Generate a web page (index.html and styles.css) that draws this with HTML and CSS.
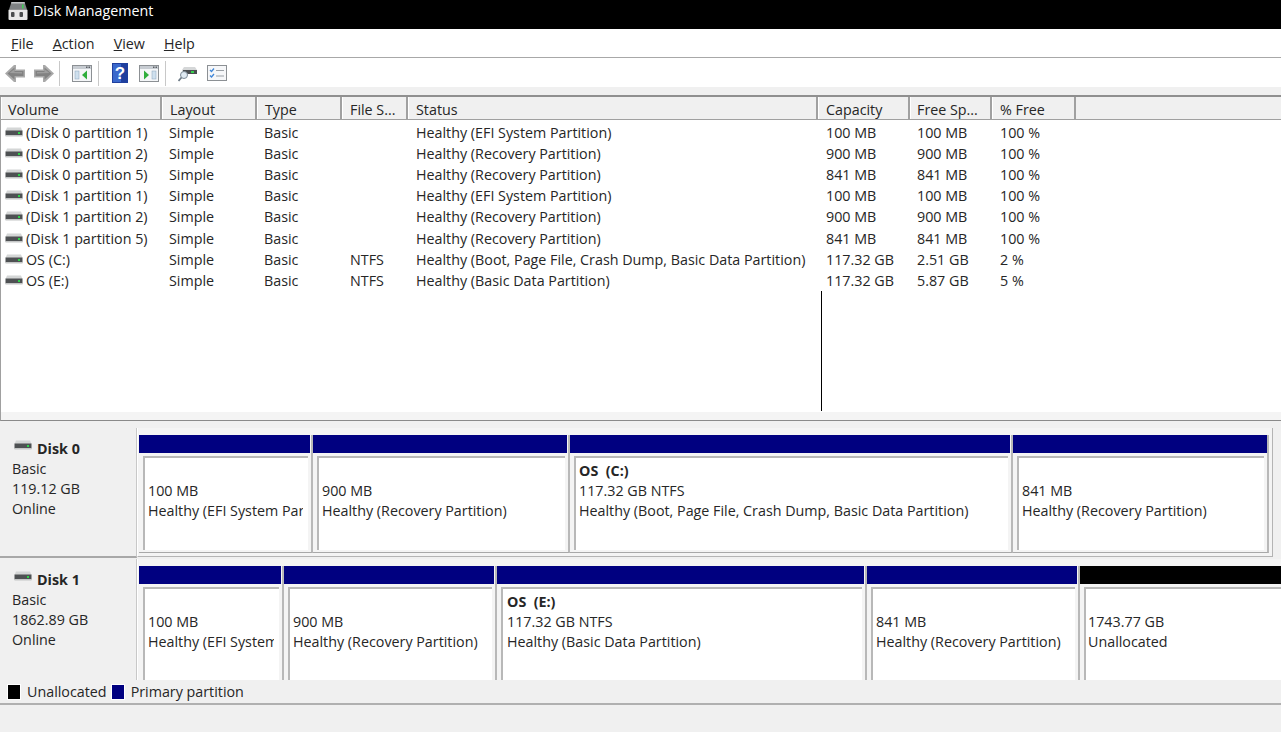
FILE: index.html
```html
<!DOCTYPE html>
<html lang="en">
<head>
<meta charset="utf-8">
<title>Disk Management</title>
<link rel="stylesheet" href="styles.css">
</head>
<body>
<svg class="defs" width="0" height="0" aria-hidden="true">
  <defs>
    <symbol id="drive" viewBox="0 0 18 12">
      <path d="M2 1.500h14l1.500 3.500H.5z" fill="#d4d6d6"/>
      <rect x="0.500" y="4.500" width="17" height="5" fill="#4e5153"/>
      <rect x="0.500" y="9" width="17" height="1.500" fill="#c4c6c6"/>
      <rect x="13" y="6" width="2" height="2" fill="#2fd24a"/>
    </symbol>
    <symbol id="arrow" viewBox="0 0 22 19">
      <path d="M1 9.500 10 1h2V5.500H21V13.500H12V18H10Z" fill="#a9a9a9"/>
      <path d="M3.500 9.500 10.500 3.500V7H19.500V12H10.500V15.500Z" fill="#828282"/>
      <path d="M5.500 9 10.500 5V8H18V9.500Z" fill="#9d9d9d"/>
    </symbol>
    <symbol id="panel" viewBox="0 0 20 17">
      <rect x="0.500" y="0.500" width="19" height="16" fill="#f4f6f8" stroke="#8c9094"/>
      <rect x="1" y="1" width="18" height="3" fill="#c7ccd2"/>
      <rect x="14" y="1.500" width="1.500" height="1.500" fill="#5c6066"/>
      <rect x="16.500" y="1.500" width="1.500" height="1.500" fill="#5c6066"/>
    </symbol>
  </defs>
</svg>

<header class="titlebar">
  <svg class="title-icon" viewBox="0 0 20 20" width="20" height="20" aria-hidden="true">
    <path d="M3.500 1h13L19 8.500H1z" fill="#7f8284"/>
    <path d="M3.500 1h13l.5 1.500H3z" fill="#c4c6c8"/>
    <rect x="14" y="3.500" width="1.500" height="4" fill="#3fcf55"/>
    <rect x="0.500" y="8.500" width="19" height="10.500" rx="1" fill="#e8e8e8"/>
    <rect x="3" y="11" width="3.500" height="5" rx="1" fill="#4a4c4e"/>
    <rect x="11.500" y="11" width="3.500" height="5" rx="1" fill="#4a4c4e"/>
  </svg>
  <span class="title-text">Disk Management</span>
</header>

<nav class="menubar">
  <span class="menu-item"><u>F</u>ile</span>
  <span class="menu-item"><u>A</u>ction</span>
  <span class="menu-item"><u>V</u>iew</span>
  <span class="menu-item"><u>H</u>elp</span>
</nav>

<div class="toolbar">
  <svg class="tb-icon tb-back" width="22" height="19" aria-hidden="true"><use href="#arrow"/></svg>
  <svg class="tb-icon tb-fwd" width="22" height="19" aria-hidden="true"><use href="#arrow"/></svg>
  <span class="tb-sep"></span>
  <svg class="tb-icon tb-show" viewBox="0 0 20 17" width="20" height="17" aria-hidden="true">
    <use href="#panel"/>
    <rect x="3" y="6" width="4" height="8" fill="#cfe0ee" stroke="#8aa4bc" stroke-width=".5"/>
    <path d="M15 5.500v9L10 10z" fill="#2fae3c"/>
  </svg>
  <span class="tb-sep"></span>
  <svg class="tb-icon tb-help" viewBox="0 0 16 20" width="16" height="20" aria-hidden="true">
    <rect x="0" y="0" width="16" height="20" fill="#1f3f9e"/>
    <rect x="1" y="1" width="8" height="18" fill="#3a68cc"/>
    <text x="8" y="16" class="help-mark">?</text>
  </svg>
  <svg class="tb-icon tb-hide" viewBox="0 0 20 17" width="20" height="17" aria-hidden="true">
    <use href="#panel"/>
    <rect x="13" y="6" width="4" height="8" fill="#cfe0ee" stroke="#8aa4bc" stroke-width=".5"/>
    <path d="M5 5.500v9l5-4.500z" fill="#2fae3c"/>
  </svg>
  <span class="tb-sep"></span>
  <svg class="tb-icon tb-search" viewBox="0 0 20 17" width="20" height="17" aria-hidden="true">
    <path d="M6 2h11l2 3v4H4V5z" fill="#d5d7d8"/>
    <rect x="5" y="5" width="14" height="4" fill="#4a4d50"/>
    <rect x="13" y="6" width="3" height="2" fill="#37d04e"/>
    <circle cx="6" cy="10" r="3.500" fill="#dfe9f2" stroke="#7d8a96"/>
    <path d="M3.500 12.500 0.500 16" stroke="#6d7a86" stroke-width="1.800"/>
  </svg>
  <svg class="tb-icon tb-check" viewBox="0 0 20 17" width="20" height="17" aria-hidden="true">
    <rect x="0.500" y="0.500" width="19" height="15" fill="#f6f7f9" stroke="#8c9094"/>
    <path d="M3 5 4.500 6.500 7 3.500M3 10.500 4.500 12 7 9" fill="none" stroke="#3f86d8" stroke-width="1.300"/>
    <path d="M9 5.500h8M9 11h8" stroke="#9aa0a6"/>
  </svg>
</div>
<div class="toolbar-gap"></div>

<section class="list">
  <div class="list-head">
    <span class="th col-volume">Volume</span>
    <span class="th col-layout">Layout</span>
    <span class="th col-type">Type</span>
    <span class="th col-fs">File S...</span>
    <span class="th col-status">Status</span>
    <span class="th col-cap">Capacity</span>
    <span class="th col-free">Free Sp...</span>
    <span class="th col-pct">% Free</span>
  </div>
  <div class="list-body">
    <div class="row"><span class="td col-volume"><svg class="drive-sm" width="18" height="12" aria-hidden="true"><use href="#drive"/></svg>(Disk 0 partition 1)</span><span class="td col-layout">Simple</span><span class="td col-type">Basic</span><span class="td col-fs"></span><span class="td col-status">Healthy (EFI System Partition)</span><span class="td col-cap">100 MB</span><span class="td col-free">100 MB</span><span class="td col-pct">100 %</span></div>
    <div class="row"><span class="td col-volume"><svg class="drive-sm" width="18" height="12" aria-hidden="true"><use href="#drive"/></svg>(Disk 0 partition 2)</span><span class="td col-layout">Simple</span><span class="td col-type">Basic</span><span class="td col-fs"></span><span class="td col-status">Healthy (Recovery Partition)</span><span class="td col-cap">900 MB</span><span class="td col-free">900 MB</span><span class="td col-pct">100 %</span></div>
    <div class="row"><span class="td col-volume"><svg class="drive-sm" width="18" height="12" aria-hidden="true"><use href="#drive"/></svg>(Disk 0 partition 5)</span><span class="td col-layout">Simple</span><span class="td col-type">Basic</span><span class="td col-fs"></span><span class="td col-status">Healthy (Recovery Partition)</span><span class="td col-cap">841 MB</span><span class="td col-free">841 MB</span><span class="td col-pct">100 %</span></div>
    <div class="row"><span class="td col-volume"><svg class="drive-sm" width="18" height="12" aria-hidden="true"><use href="#drive"/></svg>(Disk 1 partition 1)</span><span class="td col-layout">Simple</span><span class="td col-type">Basic</span><span class="td col-fs"></span><span class="td col-status">Healthy (EFI System Partition)</span><span class="td col-cap">100 MB</span><span class="td col-free">100 MB</span><span class="td col-pct">100 %</span></div>
    <div class="row"><span class="td col-volume"><svg class="drive-sm" width="18" height="12" aria-hidden="true"><use href="#drive"/></svg>(Disk 1 partition 2)</span><span class="td col-layout">Simple</span><span class="td col-type">Basic</span><span class="td col-fs"></span><span class="td col-status">Healthy (Recovery Partition)</span><span class="td col-cap">900 MB</span><span class="td col-free">900 MB</span><span class="td col-pct">100 %</span></div>
    <div class="row"><span class="td col-volume"><svg class="drive-sm" width="18" height="12" aria-hidden="true"><use href="#drive"/></svg>(Disk 1 partition 5)</span><span class="td col-layout">Simple</span><span class="td col-type">Basic</span><span class="td col-fs"></span><span class="td col-status">Healthy (Recovery Partition)</span><span class="td col-cap">841 MB</span><span class="td col-free">841 MB</span><span class="td col-pct">100 %</span></div>
    <div class="row"><span class="td col-volume"><svg class="drive-sm" width="18" height="12" aria-hidden="true"><use href="#drive"/></svg>OS (C:)</span><span class="td col-layout">Simple</span><span class="td col-type">Basic</span><span class="td col-fs">NTFS</span><span class="td col-status">Healthy (Boot, Page File, Crash Dump, Basic Data Partition)</span><span class="td col-cap">117.32 GB</span><span class="td col-free">2.51 GB</span><span class="td col-pct">2 %</span></div>
    <div class="row"><span class="td col-volume"><svg class="drive-sm" width="18" height="12" aria-hidden="true"><use href="#drive"/></svg>OS (E:)</span><span class="td col-layout">Simple</span><span class="td col-type">Basic</span><span class="td col-fs">NTFS</span><span class="td col-status">Healthy (Basic Data Partition)</span><span class="td col-cap">117.32 GB</span><span class="td col-free">5.87 GB</span><span class="td col-pct">5 %</span></div>
    <span class="stray-line"></span>
  </div>
  <div class="list-foot"></div>
</section>

<section class="disks">
  <div class="disk disk-0">
    <div class="disk-info">
      <div class="disk-name"><svg class="drive-lg" width="18" height="12" aria-hidden="true"><use href="#drive"/></svg><b>Disk 0</b></div>
      <div>Basic</div>
      <div>119.12 GB</div>
      <div>Online</div>
    </div>
    <div class="volumes">
      <div class="vol v171"><div class="vol-bar"></div><div class="vol-box"><div class="vol-text"><div>100 MB</div><div>Healthy (EFI System Par</div></div></div></div>
      <div class="vol v255"><div class="vol-bar"></div><div class="vol-box"><div class="vol-text"><div>900 MB</div><div>Healthy (Recovery Partition)</div></div></div></div>
      <div class="vol v440"><div class="vol-bar"></div><div class="vol-box"><div class="vol-text named"><b>OS&nbsp; (C:)</b><div>117.32 GB NTFS</div><div>Healthy (Boot, Page File, Crash Dump, Basic Data Partition)</div></div></div></div>
      <div class="vol v254"><div class="vol-bar"></div><div class="vol-box"><div class="vol-text"><div>841 MB</div><div>Healthy (Recovery Partition)</div></div></div></div>
    </div>
  </div>
  <div class="disk disk-1">
    <div class="disk-info">
      <div class="disk-name"><svg class="drive-lg" width="18" height="12" aria-hidden="true"><use href="#drive"/></svg><b>Disk 1</b></div>
      <div>Basic</div>
      <div>1862.89 GB</div>
      <div>Online</div>
    </div>
    <div class="volumes">
      <div class="vol v142"><div class="vol-bar"></div><div class="vol-box"><div class="vol-text"><div>100 MB</div><div>Healthy (EFI System</div></div></div></div>
      <div class="vol v211"><div class="vol-bar"></div><div class="vol-box"><div class="vol-text"><div>900 MB</div><div>Healthy (Recovery Partition)</div></div></div></div>
      <div class="vol v367"><div class="vol-bar"></div><div class="vol-box"><div class="vol-text named"><b>OS&nbsp; (E:)</b><div>117.32 GB NTFS</div><div>Healthy (Basic Data Partition)</div></div></div></div>
      <div class="vol v211"><div class="vol-bar"></div><div class="vol-box"><div class="vol-text"><div>841 MB</div><div>Healthy (Recovery Partition)</div></div></div></div>
      <div class="vol v-rest"><div class="vol-bar vol-bar-black"></div><div class="vol-box"><div class="vol-text"><div>1743.77 GB</div><div>Unallocated</div></div></div></div>
    </div>
  </div>
</section>

<div class="legend">
  <span class="swatch swatch-black"></span><span class="legend-label">Unallocated</span>
  <span class="swatch swatch-navy"></span><span class="legend-label">Primary partition</span>
</div>
<div class="statusbar"></div>
</body>
</html>
```

FILE: styles.css
```css
* { box-sizing: border-box; }
html, body { margin: 0; padding: 0; }
body {
  width: 1281px;
  height: 732px;
  overflow: hidden;
  background: #f0f0f0;
  color: #262626;
  font-family: "Open Sans", "Noto Sans", sans-serif;
  font-size: 14.300px;
  line-height: 20px;
  display: flex;
  flex-direction: column;
}
.defs { position: absolute; }

.titlebar {
  height: 29px;
  flex: none;
  background: #000;
  color: #fff;
  display: flex;
  align-items: center;
  padding: 0 0 8px 8px;
  gap: 5px;
  overflow: hidden;
}
.title-text { line-height: 20px; }

.menubar {
  height: 29px;
  flex: none;
  background: #fff;
  border-bottom: 1px solid #a8a8a8;
  display: flex;
  align-items: center;
  padding: 2px 0 0 11px;
  gap: 19px;
}

.toolbar {
  height: 29px;
  flex: none;
  background: #fff;
  display: flex;
  align-items: center;
  padding: 1px 0 0 4px;
}
.tb-icon { flex: none; display: block; }
.tb-fwd { margin-left: 7px; transform: scaleX(-1); }
.tb-sep { width: 1px; height: 25px; background: #c8c8c8; flex: none; }
.tb-fwd + .tb-sep { margin-left: 4px; }
.tb-show { margin-left: 12px; }
.tb-show + .tb-sep { margin-left: 6px; }
.tb-help { margin-left: 13px; }
.tb-hide { margin-left: 11px; }
.tb-hide + .tb-sep { margin-left: 6px; }
.tb-search { margin-left: 12px; }
.tb-check { margin-left: 9px; }
.help-mark { fill: #fff; font: bold 17px "Liberation Sans", sans-serif; text-anchor: middle; }

.toolbar-gap {
  height: 10px;
  flex: none;
  background: #f0f0f0;
  border-bottom: 2px solid #8f8f8f;
}

.list {
  height: 324px;
  flex: none;
  background: #fff;
  border-left: 1px solid #a0a0a0;
  border-bottom: 1px solid #8a8a8a;
  display: flex;
  flex-direction: column;
}
.list-head {
  height: 23px;
  flex: none;
  display: flex;
  background: #f0f0f0;
  border-bottom: 1px solid #a0a0a0;
}
.th {
  height: 22px;
  padding: 4px 0 0 7px;
  line-height: 18px;
  flex: none;
  white-space: nowrap;
  border-right: 2px solid #a0a0a0;
  border-left: 1px solid #fff;
  overflow: hidden;
}
.th.col-volume { padding-left: 6px; }
.th.col-free { padding-left: 6px; }
.col-volume { width: 161px; }
.col-layout { width: 95px; }
.col-type { width: 85px; }
.col-fs { width: 66px; }
.col-status { width: 410px; }
.col-cap { width: 92px; }
.col-free { width: 82px; }
.col-pct { width: 84px; }

.list-body {
  flex: 1;
  position: relative;
  padding-top: 2px;
  background: #fff;
}
.row {
  display: flex;
  height: 21.200px;
  align-items: center;
}
.td {
  flex: none;
  padding-left: 7px;
  white-space: nowrap;
  display: block;
}
.td.col-fs, .td.col-status { padding-left: 8px; }
.td.col-volume { padding-left: 4px; display: flex; align-items: center; gap: 3px; }
.td.col-cap, .td.col-pct { padding-left: 8px; }
.drive-sm { flex: none; margin-top: -2px; }
.stray-line {
  position: absolute;
  left: 820px;
  top: 171px;
  width: 1px;
  height: 120px;
  background: #000;
}
.list-foot { height: 8px; flex: none; background: #f4f4f4; }

.disks { height: 259px; flex: none; display: flex; flex-direction: column; padding-top: 7px; overflow: hidden; }
.disk { display: flex; flex: none; }
.disk-0 { height: 131px; }
.disk-1 { height: 121px; }
.disk-info {
  width: 137px;
  flex: none;
  padding: 11px 0 0 12px;
  border-right: 1px solid #c8c8c8;
  background: #f0f0f0;
}
.disk-0 .disk-info { height: 130px; border-bottom: 2px solid #a8a8a8; }
.disk-name { display: flex; align-items: center; gap: 5px; }
.drive-lg { margin: -8px 0 0 2px; }
.volumes {
  flex: none;
  display: flex;
  background: #f4f4f4;
  padding: 7px 0 0 1px;
  border-left: 1px solid #fff;
  min-width: 0;
}
.disk-0 .volumes {
  width: 1136px;
  height: 129px;
  padding-bottom: 3px;
  border-right: 1px solid #b4b4b4;
  border-bottom: 1px solid #b4b4b4;
}
.disk-1 .volumes { width: 1144px; overflow: hidden; }
.vol {
  flex: none;
  display: flex;
  flex-direction: column;
  min-width: 0;
  border-right: 2px solid #b8b8b8;
}
.disk-0 .vol { border-bottom: 1px solid #a8a8a8; }
.v171 { width: 174px; }
.v255 { width: 257px; }
.v440 { width: 443px; }
.v254 { width: 256px; }
.v254 .vol-bar { margin-right: 0; }
.v142 { width: 145px; }
.v211 { width: 213px; }
.v367 { width: 370px; }
.v-rest { width: 260px; border-right: 0; }
.vol-bar {
  height: 18px;
  flex: none;
  background: #000080;
  margin-right: 1px;
}
.vol-bar-black { background: #000; margin-right: 0; }
.vol-box {
  flex: 1;
  margin: 3px 3px 2px 4px;
  min-height: 0;
  background: #fff;
  border-left: 2px solid #b8b8b8;
  border-top: 2px solid #b8b8b8;
  overflow: hidden;
}
.disk-1 .vol-box { margin-bottom: 0; }
.vol-text { padding: 23px 0 0 3px; white-space: nowrap; overflow: hidden; margin-right: 5px; }
.vol-text.named { padding-top: 3px; }
.v367 .vol-text { padding-left: 4px; }
.v-rest .vol-text { padding-left: 2px; }
.vol-text b { display: block; }

.legend {
  height: 25px;
  flex: none;
  display: flex;
  align-items: center;
  padding: 0 0 0 7px;
  background: #f0f0f0;
  border-bottom: 2px solid #b0b0b0;
  overflow: hidden;
}
.swatch { width: 14px; height: 16px; flex: none; border: 1px solid #fff; }
.swatch-black { background: #000; }
.swatch-navy { background: #000080; margin-left: 4px; }
.legend-label { margin-left: 6px; white-space: nowrap; }
.statusbar { flex: 1; background: #f0f0f0; }
```
